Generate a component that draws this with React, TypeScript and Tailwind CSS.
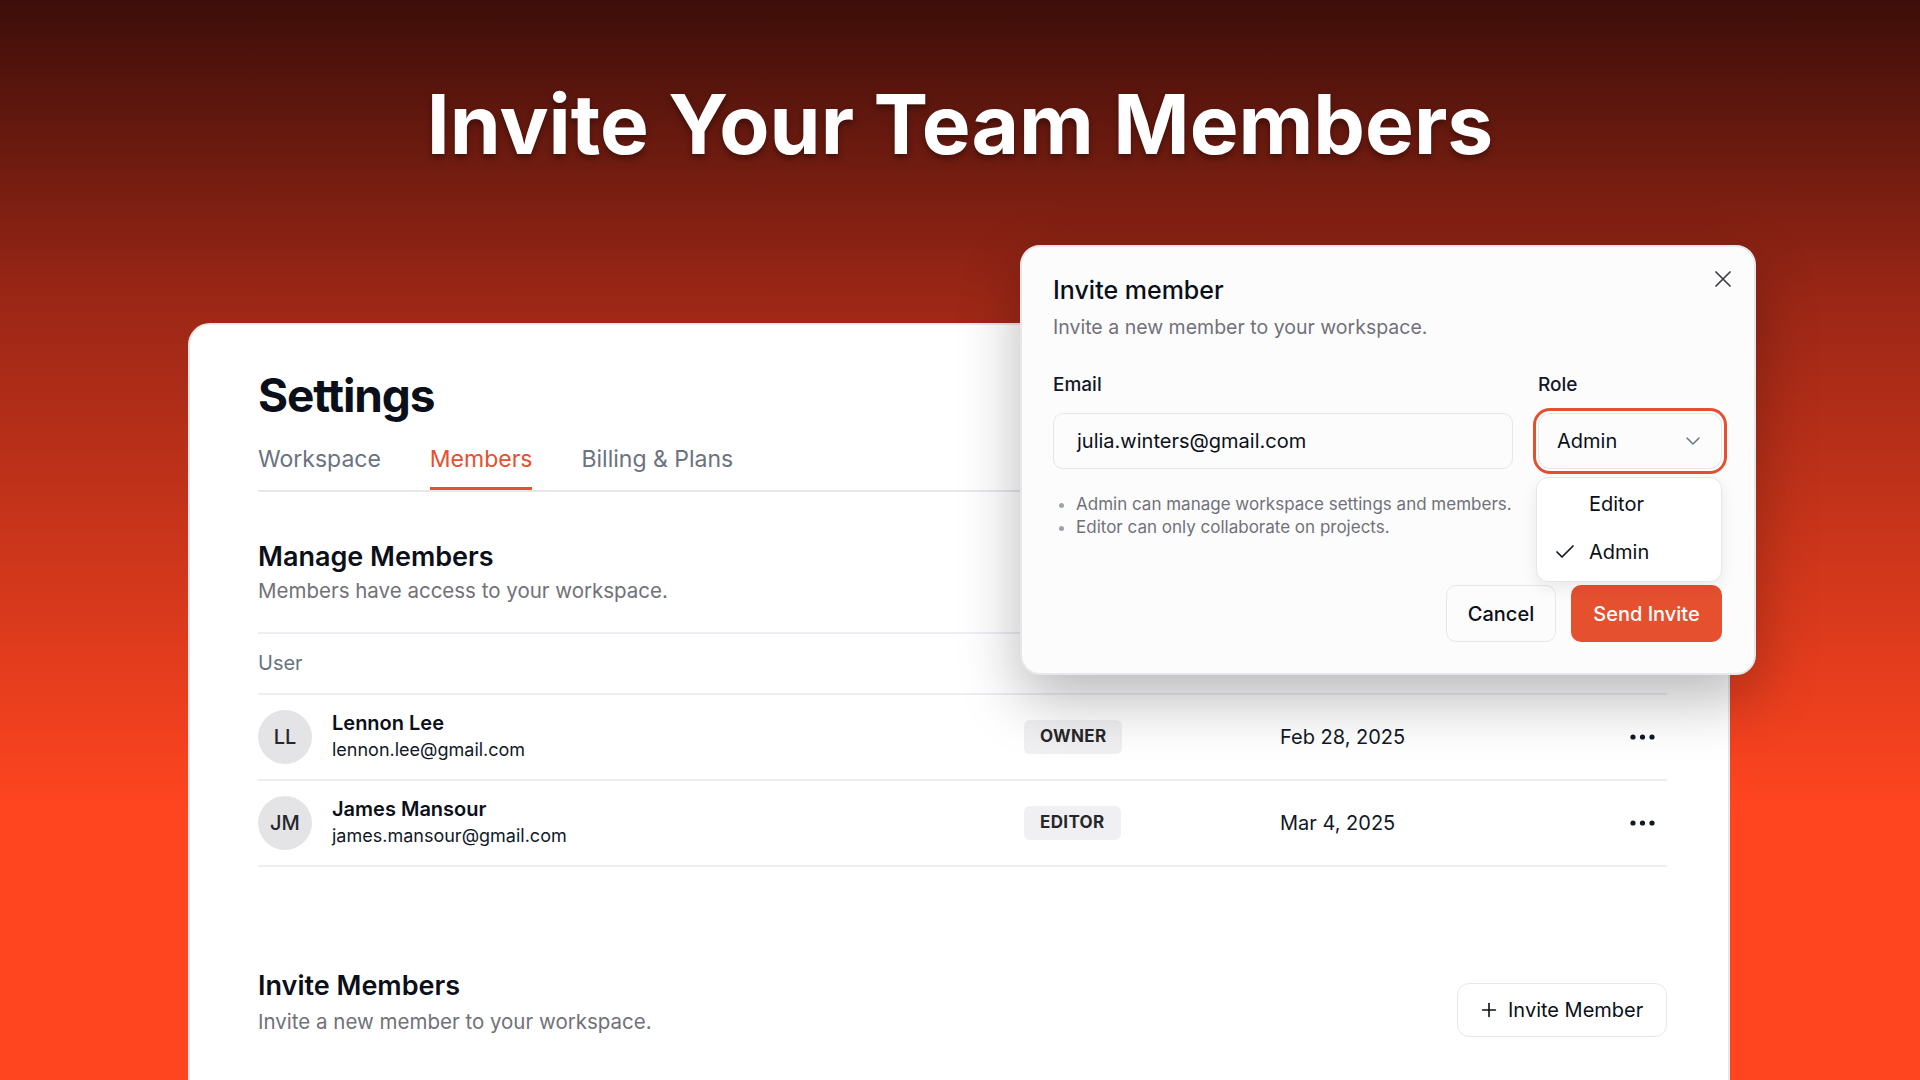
import React from 'react';
import { X, ChevronDown, Check, Plus } from 'lucide-react';

interface Member {
  initials: string;
  name: string;
  email: string;
  role: string;
  joined: string;
}

const members: Member[] = [
  { initials: 'LL', name: 'Lennon Lee', email: 'lennon.lee@gmail.com', role: 'OWNER', joined: 'Feb 28, 2025' },
  { initials: 'JM', name: 'James Mansour', email: 'james.mansour@gmail.com', role: 'EDITOR', joined: 'Mar 4, 2025' },
];

const Dots = () => (
  <svg width="25" height="6" viewBox="0 0 25 6" fill="#111827">
    <circle cx="3" cy="3" r="2.6" />
    <circle cx="12.5" cy="3" r="2.6" />
    <circle cx="22" cy="3" r="2.6" />
  </svg>
);

const InviteModal: React.FC = () => (
  <div className="absolute left-[1020px] top-[245px] w-[736px] h-[430px] rounded-[20px] border-2 border-[#e5e7eb] bg-[#fcfcfd] pl-[31px] pr-[32px] pt-[31px] pb-[31px] flex flex-col shadow-[0_24px_60px_rgba(0,0,0,0.28)]">
    <button className="absolute top-[18px] right-[17px] text-[#3f3f46]">
      <X size={28} strokeWidth={1.5} />
    </button>

    <h2 className="text-[25px] leading-none font-medium text-[#0b0f1a]">Invite member</h2>
    <p className="mt-[15px] text-[19.5px] leading-none text-[#71717a]">Invite a new member to your workspace.</p>

    {/* Form */}
    <div className="mt-[37px] flex">
      <div className="w-[460px]">
        <label className="block text-[19px] leading-none font-medium text-[#111827]">Email</label>
        <div className="mt-[19px] h-[56px] rounded-[10px] border border-[#e5e7eb] bg-[#fcfcfd] pl-[23px] flex items-center text-[20px] text-[#0b0f1a]">
          julia.winters@gmail.com
        </div>
      </div>
      <div className="ml-[25px] w-[184px] relative">
        <label className="block text-[19px] leading-none font-medium text-[#111827]">Role</label>
        <div className="mt-[19px] h-[56px] rounded-[12px] border border-[#e5e7eb] bg-[#fcfcfd] pl-[18px] pr-[16px] flex items-center justify-between text-[20px] text-[#0b0f1a] ring-[3px] ring-[#e4502f] ring-offset-2 ring-offset-white">
          <span>Admin</span>
          <ChevronDown size={24} strokeWidth={1.5} className="text-[#6b7280]" />
        </div>

        {/* Open select menu */}
        <div className="absolute top-[calc(100%+8px)] left-[-2px] w-[186px] h-[105px] rounded-[12px] border border-[#e5e7eb] bg-white shadow-[0_6px_16px_rgba(0,0,0,0.08)] flex flex-col justify-center gap-[26px]">
          <div className="pl-[52px] text-[20px] leading-none text-[#0b0f1a]">Editor</div>
          <div className="flex items-center pl-[16px] text-[20px] leading-none text-[#0b0f1a]">
            <Check size={24} strokeWidth={1.75} className="text-[#111827]" />
            <span className="ml-[12px]">Admin</span>
          </div>
        </div>
      </div>
    </div>

    <ul className="mt-[24px] list-disc pl-[23px] text-[17px] leading-[23px] text-[#71717a] marker:text-[#9ca3af]">
      <li>Admin can manage workspace settings and members.</li>
      <li>Editor can only collaborate on projects.</li>
    </ul>

    <div className="mt-auto flex justify-end gap-[15px]">
      <button className="h-[57px] w-[110px] rounded-[10px] border border-[#e5e7eb] bg-[#fcfcfd] text-[20px] font-medium text-[#0b0f1a]">
        Cancel
      </button>
      <button className="h-[57px] w-[151px] rounded-[10px] bg-[#e5502f] text-[20px] font-medium text-white">
        Send Invite
      </button>
    </div>
  </div>
);

const App: React.FC = () => {
  return (
    <div className="relative w-[1920px] h-[1080px] overflow-hidden bg-[linear-gradient(180deg,#3c0e09_0%,#9c2716_28%,#ff4520_75%,#ff4420_100%)] font-['Inter',sans-serif]">
      <h1 className="pt-[84px] h-[165px] text-center text-[82px] font-bold leading-none text-white [text-shadow:0_4px_6px_rgba(0,0,0,0.35)]">
        Invite Your Team Members
      </h1>

      {/* Settings card */}
      <div className="ml-[188px] mt-[158px] w-[1542px] h-[800px] rounded-t-[22px] border-2 border-[#e5e7eb] bg-white pl-[68px] pr-[61px] pt-[47px]">
        <h2 className="text-[46px] leading-none font-bold tracking-tight text-[#0b0f1a]">Settings</h2>

        {/* Tabs */}
        <div className="mt-[30px] flex gap-[49px] border-b-2 border-[#e5e7eb] text-[23px] leading-none">
          <div className="pb-[16px] border-b-[3px] border-transparent text-[#6b7280]">Workspace</div>
          <div className="pb-[16px] border-b-[3px] border-[#e5502f] text-[#e5502f]">Members</div>
          <div className="pb-[16px] border-b-[3px] border-transparent text-[#6b7280]">Billing &amp; Plans</div>
        </div>

        {/* Manage Members */}
        <h3 className="mt-[51px] text-[27px] leading-none font-semibold text-[#0b0f1a]">Manage Members</h3>
        <p className="mt-[11px] text-[20.5px] leading-none text-[#71717a]">Members have access to your workspace.</p>

        <div className="mt-[30px] border-t-2 border-[#eceef2]">
          <div className="h-[61px] flex items-center border-b-2 border-[#eceef2] text-[20px] text-[#6b7280]">User</div>
          {members.map((m) => (
            <div key={m.email} className="h-[86px] flex items-center border-b-2 border-[#eceef2]">
              <div className="w-[766px] flex items-center">
                <div className="w-[54px] h-[54px] rounded-full bg-[#e4e4e7] flex items-center justify-center text-[20px] font-medium text-[#27272a]">
                  {m.initials}
                </div>
                <div className="ml-[20px]">
                  <div className="text-[20px] leading-[25px] font-semibold text-[#0b0f1a]">{m.name}</div>
                  <div className="text-[18px] leading-[27px] text-[#111827]">{m.email}</div>
                </div>
              </div>
              <div className="w-[256px]">
                <span className="inline-flex h-[34px] px-[16px] items-center rounded-[6px] bg-[#f0f0f3] text-[17px] font-bold tracking-[0.02em] text-[#27272a]">
                  {m.role}
                </span>
              </div>
              <div className="flex-1 text-[20px] text-[#111827]">{m.joined}</div>
              <div className="w-[60px] flex justify-end pr-[12px]">
                <Dots />
              </div>
            </div>
          ))}
        </div>

        {/* Invite Members */}
        <div className="mt-[105px] flex items-start justify-between">
          <div>
            <h3 className="text-[27px] leading-none font-semibold text-[#0b0f1a]">Invite Members</h3>
            <p className="mt-[13px] text-[20.5px] leading-none text-[#71717a]">Invite a new member to your workspace.</p>
          </div>
          <button className="mt-[11px] h-[54px] w-[210px] rounded-[12px] border-[1.5px] border-[#e5e7eb] bg-white pl-[20px] flex items-center gap-[8px] text-[20px] text-[#0b0f1a]">
            <Plus size={22} strokeWidth={1.75} />
            <span>Invite Member</span>
          </button>
        </div>
      </div>

      <InviteModal />
    </div>
  );
};

export default App;
